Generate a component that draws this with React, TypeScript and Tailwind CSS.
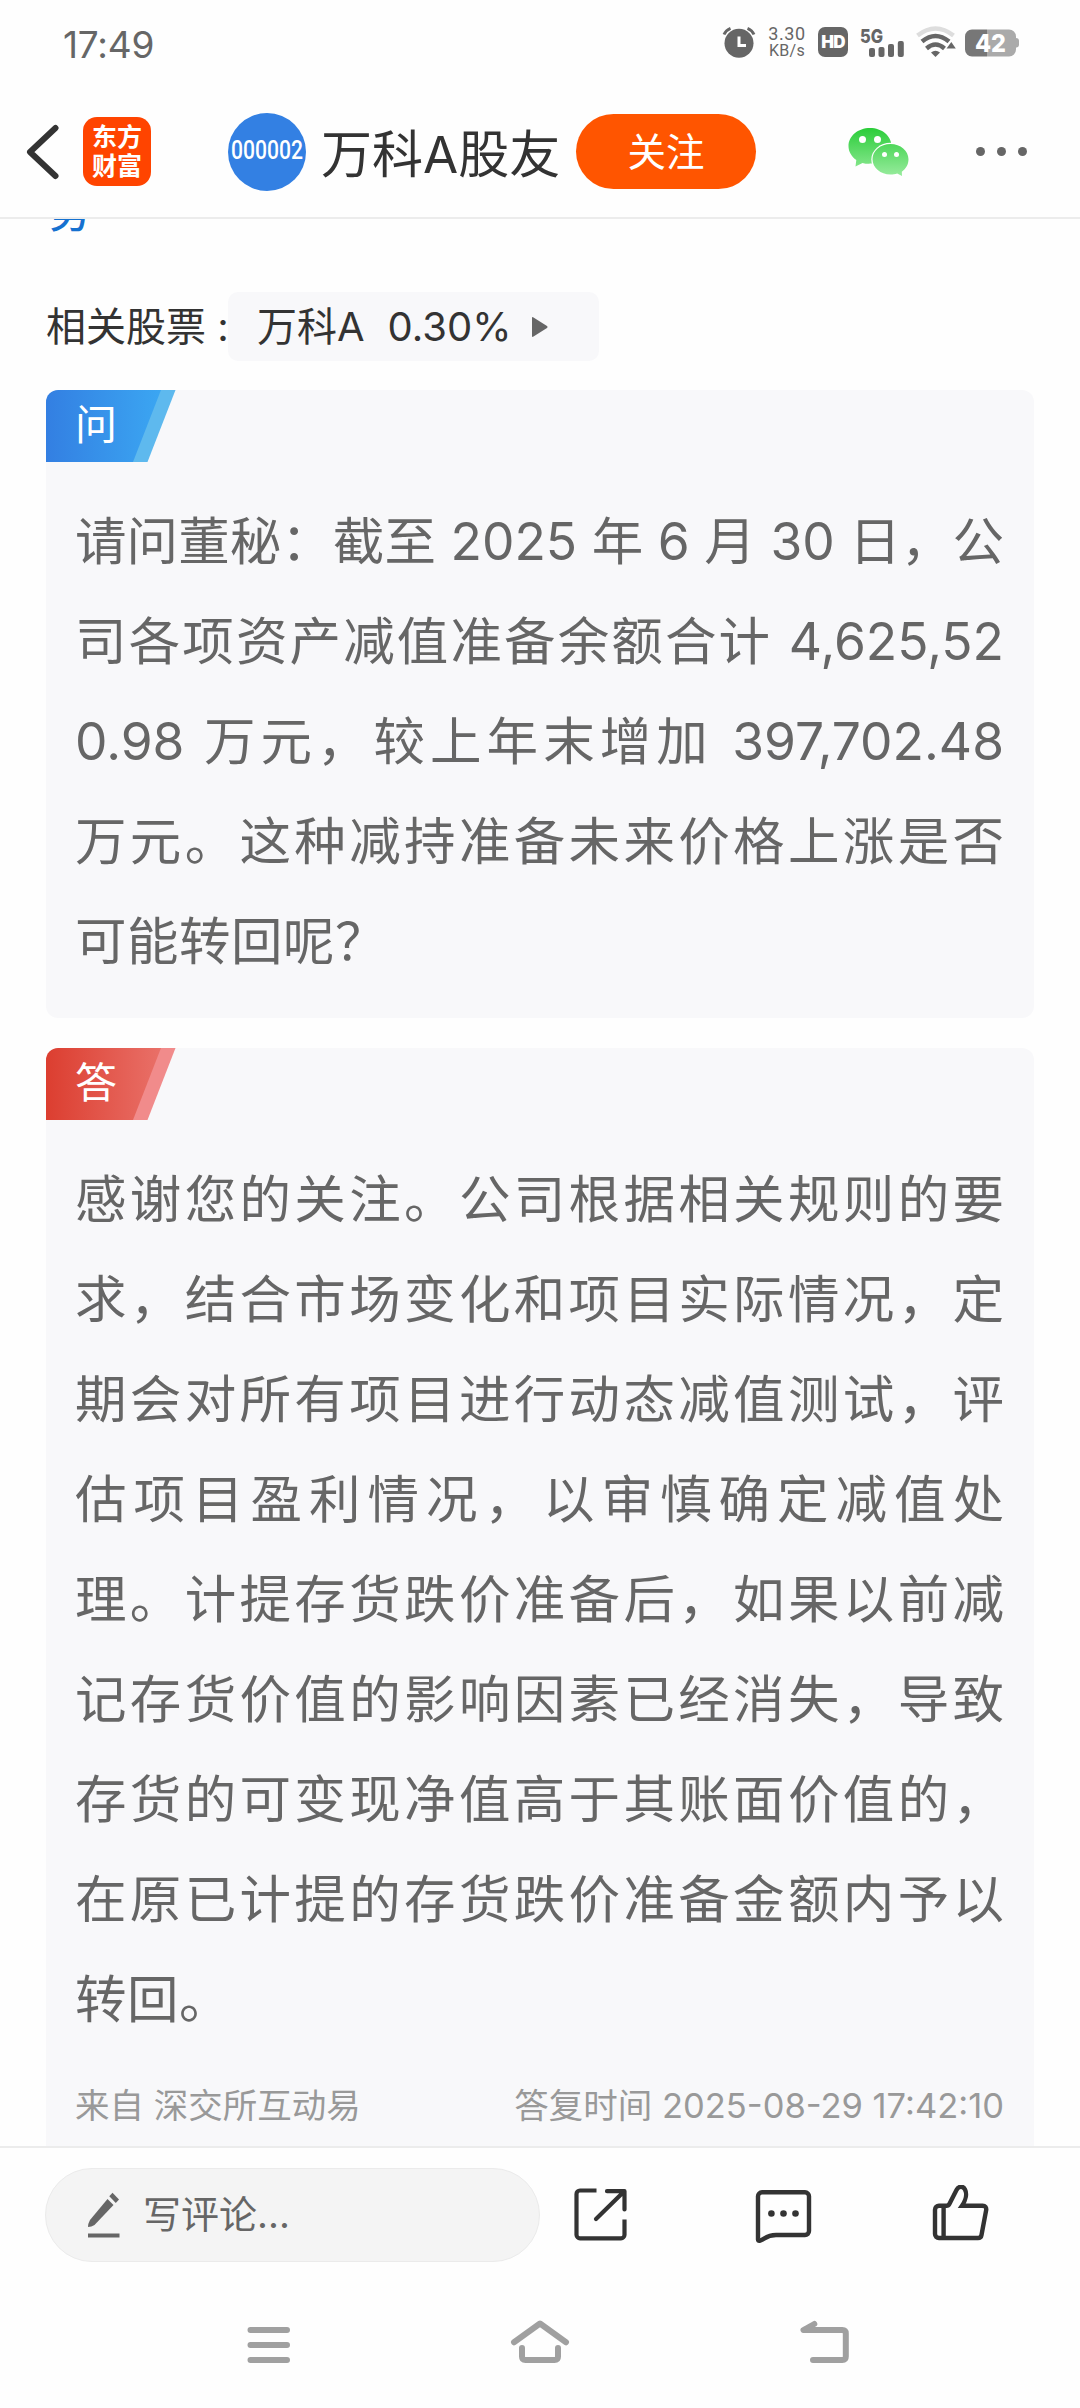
import React from 'react';

const QUESTION_LINES = [
    '请问董秘：截至 2025 年 6 月 30 日，公',
    '司各项资产减值准备余额合计 4,625,52',
    '0.98 万元，较上年末增加 397,702.48',
    '万元。这种减持准备未来价格上涨是否',
    '可能转回呢？',
];

const ANSWER_LINES = [
    '感谢您的关注。公司根据相关规则的要',
    '求，结合市场变化和项目实际情况，定',
    '期会对所有项目进行动态减值测试，评',
    '估项目盈利情况，以审慎确定减值处',
    '理。计提存货跌价准备后，如果以前减',
    '记存货价值的影响因素已经消失，导致',
    '存货的可变现净值高于其账面价值的，',
    '在原已计提的存货跌价准备金额内予以',
    '转回。',
];

const StatusBar = () => (
    <div className="flex h-[84px] shrink-0 items-center pl-[63px] pr-[61px] text-[#666]">
        <span className="mt-1 text-[37px] leading-none tracking-[-0.2px]">17:49</span>
        <div className="ml-auto flex items-center">
            <svg className="h-8 w-[34px]" viewBox="0 0 34 32" fill="none">
                <circle cx="17" cy="17.3" r="14.5" fill="#666" />
                <path d="M2 8.5Q4 4 8.5 2.3M32 8.5Q30 4 25.5 2.3" stroke="#666" strokeWidth="3" />
                <path d="M17 10.5v9h7" stroke="#fff" strokeWidth="3" />
            </svg>
            <div className="ml-3 flex w-[38px] flex-col items-center font-[Roboto,sans-serif]">
                <span className="text-[18px] leading-[18px] tracking-[0.6px]">3.30</span>
                <span className="text-[16px] leading-[16px] tracking-[0.3px]">KB/s</span>
            </div>
            <div className="ml-3 flex h-[30px] w-[30px] items-center justify-center rounded-[7px] bg-[#666] text-[17px] font-black leading-none tracking-[-0.8px] text-white">
                HD
            </div>
            <svg className="ml-3 h-8 w-[46px]" viewBox="0 0 46 32">
                <text x="0" y="16.5" fontSize="19" fontWeight="800" fill="#666" textLength="23" lengthAdjust="spacingAndGlyphs" className="font-[Inter,sans-serif]">5G</text>
                <g fill="#666">
                    <rect x="9" y="22" width="6" height="9" rx="2" />
                    <rect x="18.5" y="21" width="6" height="10" rx="2" />
                    <rect x="28" y="18" width="6" height="13" rx="2" />
                    <rect x="37.8" y="15" width="6" height="16" rx="2" />
                </g>
            </svg>
            <svg className="ml-[10px] h-8 w-10" viewBox="0 0 40 32" fill="none">
                <path d="M1.5 9.5Q19.5-4.5 37.5 9.5" stroke="#ddd" strokeWidth="4.5" />
                <path d="M6 15.5Q19.5 4.5 33 15.5" stroke="#666" strokeWidth="4.6" />
                <path d="M10.5 22.5Q19.5 14.5 28.5 22.5" stroke="#666" strokeWidth="4.4" />
                <path d="M15 26.5q4.5-3.5 9 0l-4.5 4.5z" fill="#666" />
                <path d="M30.5 22.5l4.8-6.5 4.5 6.5z" fill="#666" />
            </svg>
            <svg className="ml-[9px] h-8 w-[54px]" viewBox="0 0 54 32">
                <path d="M49 12h2a3 3 0 0 1 3 3v3.5a3 3 0 0 1-3 3h-2z" fill="#aaa" />
                <path d="M22 3.5h22a7 7 0 0 1 7 7v13a7 7 0 0 1-7 7H22z" fill="#aaa" />
                <path d="M22 3.5H7a7 7 0 0 0-7 7v13a7 7 0 0 0 7 7h15z" fill="#777" />
                <text x="10" y="26" fontSize="25" fontWeight="800" fill="#fff" textLength="31" lengthAdjust="spacingAndGlyphs" className="font-[Inter,sans-serif]">42</text>
            </svg>
        </div>
    </div>
);

const WechatIcon = () => (
    <svg className="h-[50px] w-[62px]" viewBox="0 0 62 50">
        <defs>
            <linearGradient id="wechat" x1="0" y1="0" x2="0" y2="50" gradientUnits="userSpaceOnUse">
                <stop offset="0" stopColor="#28cc37" />
                <stop offset="1" stopColor="#9aec9f" />
            </linearGradient>
        </defs>
        <path d="M22 1C10 1 .5 9 .5 19c0 5.8 3 10.5 7.8 14L7.5 39.5l7-3.6c3 .8 5.5 1 9.5.7C34 36 43.5 29 43.5 19S34 1 22 1z" fill="url(#wechat)" />
        <ellipse cx="42.5" cy="32.5" rx="19.2" ry="16.7" fill="#fff" />
        <path d="M42.5 17C32.5 17 24.5 23.8 24.5 32.3S32.5 47.5 42.5 47.5c2.5 0 4.5-.3 6.7-1L54 49l-.2-4.2c4.3-2.9 6.7-7.5 6.7-12.5C60.5 23.8 52.5 17 42.5 17z" fill="url(#wechat)" />
        <g fill="#fff">
            <circle cx="14.5" cy="12.5" r="3.5" />
            <circle cx="29.5" cy="12.5" r="3.5" />
            <circle cx="36.5" cy="27.5" r="2.5" />
            <circle cx="48.5" cy="27.5" r="2.5" />
        </g>
    </svg>
);

const Header = () => (
    <header className="flex h-[135px] shrink-0 items-center border-b-2 border-[#ececec] pl-[26px] pr-[53px] pt-0.5">
        <svg className="h-14 w-[34px]" viewBox="0 0 34 56" fill="none">
            <path d="M29.5 4L4 28l25.5 24" stroke="#333" strokeWidth="6" strokeLinecap="round" strokeLinejoin="round" />
        </svg>
        <div className="ml-[23px] flex h-[69px] w-[68px] flex-col items-center justify-center rounded-[14px] bg-[#ff4400] text-[25px] font-bold leading-[29px] text-white">
            <span>东方</span>
            <span>财富</span>
        </div>
        <div className="ml-[77px] flex h-[78px] w-[78px] items-center justify-center rounded-full bg-[#3380e3]">
            <svg className="h-9 w-[76px]" viewBox="0 0 76 36">
                <text x="2" y="24.5" fontSize="25" fontWeight="500" fill="#fff" textLength="72" lengthAdjust="spacingAndGlyphs" className="font-[Roboto,sans-serif]">000002</text>
            </svg>
        </div>
        <h1 className="ml-[15px] mt-1.5 w-[255px] whitespace-nowrap text-[51px] leading-none text-[#333]">万科A股友</h1>
        <button className="flex h-[75px] w-[180px] items-center justify-center rounded-full bg-[#ff5500] pt-0.5 text-[38.5px] leading-none text-white">关注</button>
        <div className="ml-[92px]">
            <WechatIcon />
        </div>
        <div className="ml-auto flex gap-3">
            <i className="h-[9px] w-[9px] rounded-full bg-[#666]" />
            <i className="h-[9px] w-[9px] rounded-full bg-[#666]" />
            <i className="h-[9px] w-[9px] rounded-full bg-[#666]" />
        </div>
    </header>
);

interface BadgeProps {
    id: string;
    label: string;
    from: string;
    to: string;
    tail: string;
}

const Badge: React.FC<BadgeProps> = ({ id, label, from, to, tail }) => (
    <div className="relative h-[72px] w-[130px]">
        <svg className="h-[72px] w-[130px]" viewBox="0 0 130 72">
            <defs>
                <linearGradient id={id} x1="0" x2="1" y1="0" y2="0">
                    <stop offset="0" stopColor={from} />
                    <stop offset="1" stopColor={to} />
                </linearGradient>
            </defs>
            <path d="M100 0h29.5L101.5 72H80z" fill={tail} />
            <path d="M0 0h115L87 72H0z" fill={`url(#${id})`} />
        </svg>
        <span className="absolute left-[29px] top-[14px] text-[42px] leading-[42px] text-white">{label}</span>
    </div>
);

// Each row stretches to the full width, the last one keeps its natural spacing
const Paragraph = ({ lines }: { lines: string[] }) => (
    <div className="mt-[29px] pl-[29px] pr-[30px] text-[51.5px] leading-[100px] text-[#666]">
        {lines.map((line, i) => (
            <p
                key={line}
                className={i === lines.length - 1 ? 'whitespace-nowrap tracking-[0.5px]' : 'h-[100px] [text-align-last:justify]'}
            >
                {line}
            </p>
        ))}
    </div>
);

const BottomBar = () => (
    <div className="flex h-[136px] shrink-0 items-start border-t-2 border-[#ececec] bg-[#fefefe] pl-[45px] pt-[20px]">
        <div className="flex h-[94px] w-[495px] items-center rounded-full border border-[#ebebeb] bg-[#f4f4f4] pl-[41px] text-[38px] leading-none text-[#666]">
            <svg className="mr-[22px] h-[46px] w-[34px]" viewBox="0 0 34 46" fill="#666">
                <path d="M20.5 7l6 6L7.5 33q-3 2-6.5 2 0-3.5 2-7z" />
                <path d="M25.5.8l6.5 6.7-3.2 3.5-6.5-6.7z" />
                <path d="M1 41.5h31.5v4H1z" />
            </svg>
            <span className="-mt-0.5">写评论...</span>
        </div>
        <div className="flex pt-[17px] text-[#333]">
            <svg className="ml-[34px] h-14 w-14" viewBox="0 -3 56 56" fill="none" stroke="currentColor" strokeWidth="4.2">
                <path d="M22.5 2.5H6A3.5 3.5 0 0 0 2.5 6V47A3.5 3.5 0 0 0 6 50.3H47A3.5 3.5 0 0 0 50.5 47V31.5" />
                <path d="M33 3.2H50.5V21.5M22 31L49 4.5" strokeLinecap="round" strokeLinejoin="round" />
            </svg>
            <svg className="ml-[124px] h-[60px] w-[60px]" viewBox="0 -2 60 60" fill="none" stroke="currentColor" strokeWidth="4.4" strokeLinejoin="round">
                <path d="M4 9.3a4 4 0 0 1 4-4H51a4 4 0 0 1 4 4V44a4 4 0 0 1-4 4H22C12 48 10.5 52.5 5.5 53.8Q4 54 4 52.5z" />
                <g fill="currentColor" stroke="none">
                    <circle cx="17.4" cy="26.5" r="3.3" />
                    <circle cx="29.5" cy="26.5" r="3.3" />
                    <circle cx="41.5" cy="26.5" r="3.3" />
                </g>
            </svg>
            <svg className="ml-[117px] h-[60px] w-[60px]" viewBox="0 2 60 60" fill="none" stroke="currentColor" strokeWidth="4.4">
                <path d="M12.6 22.7V55M8 22.7h7.5q2 0 3-2L25.5 7C27.5 3 32 2.5 34 6.5S35 17 31 22.7H51.5Q55.7 23 55.2 27L50.5 52Q50 55 47 55H8a4 4 0 0 1-4-4V26.7a4 4 0 0 1 4-4z" />
            </svg>
        </div>
    </div>
);

const NavBar = () => (
    <nav className="flex h-[126px] shrink-0 items-start bg-[#fefefe] pt-[35px]">
        <svg className="ml-[244px] h-[50px] w-[52px]" viewBox="0 0 52 50" stroke="#a0a0a0" strokeWidth="6" strokeLinecap="round">
            <path d="M6.5 13h36.5M6.5 28h36.5M6.5 43h36.5" />
        </svg>
        <svg className="ml-[212px] h-[50px] w-16" viewBox="0 0 64 50" fill="none" stroke="#a0a0a0" strokeWidth="6" strokeLinecap="round" strokeLinejoin="round">
            <path d="M6 25.3L32 6.5 58 25.3M14 31v8.5q0 3.5 3.5 3.5h29q3.5 0 3.5-3.5V31" />
        </svg>
        <svg className="ml-[226px] h-[50px] w-[54px]" viewBox="0 0 54 50" fill="none" stroke="#a0a0a0" strokeWidth="6" strokeLinecap="round" strokeLinejoin="round">
            <path d="M16.3 7L5.5 13H44.3q3.5 0 3.5 3.5v23q0 3.5-3.5 3.5H15" />
        </svg>
    </nav>
);

export default function App() {
    return (
        <div className="flex h-[2408px] w-[1080px] flex-col overflow-hidden bg-[#fefefe] font-['Inter','Noto_Sans_CJK_SC',sans-serif]">
            <StatusBar />
            <Header />

            <main className="flex min-h-0 flex-1 flex-col overflow-hidden px-[46px]">
                {/* tail of the post text, scrolled under the header */}
                <div className="flex h-[14px] shrink-0 items-end overflow-hidden pl-[3px] text-[41px] font-medium leading-[39px] text-[#1571d0]">
                    <span>务</span>
                </div>

                <div className="mt-[59px] flex h-[69px] shrink-0 items-center text-[40px] leading-none text-[#333]">
                    <span className="w-[182px] whitespace-nowrap">相关股票 :</span>
                    <div className="flex h-[69px] w-[371px] items-center rounded-[10px] bg-[#f8f8fa] pl-[29px]">
                        <span>万科A</span>
                        <span className="ml-[23px]">0.30%</span>
                        <svg className="ml-[20px] h-5 w-4" viewBox="0 0 16 20" fill="#666">
                            <path d="M0 1q0-1.5 1.5-.5L15 9q1 1 0 2L1.5 19.5Q0 20.5 0 19z" />
                        </svg>
                    </div>
                </div>

                <section className="mt-[29px] h-[628px] shrink-0 overflow-hidden rounded-[12px] bg-[#f8f8fa]">
                    <Badge id="ask" label="问" from="#337fe2" to="#3ba6f2" tail="#5eb9ee" />
                    <Paragraph lines={QUESTION_LINES} />
                </section>

                <section className="mt-[30px] h-[1110px] shrink-0 overflow-hidden rounded-t-[12px] bg-[#f8f8fa]">
                    <Badge id="reply" label="答" from="#dc3e30" to="#e97068" tail="#f18b8b" />
                    <Paragraph lines={ANSWER_LINES} />
                    <div className="mt-[37px] flex justify-between pl-[29px] pr-[30px] text-[34.5px] leading-[40px] text-[#999]">
                        <span>来自 深交所互动易</span>
                        <span>答复时间 2025-08-29 17:42:10</span>
                    </div>
                </section>
            </main>

            <BottomBar />
            <NavBar />
        </div>
    );
}
